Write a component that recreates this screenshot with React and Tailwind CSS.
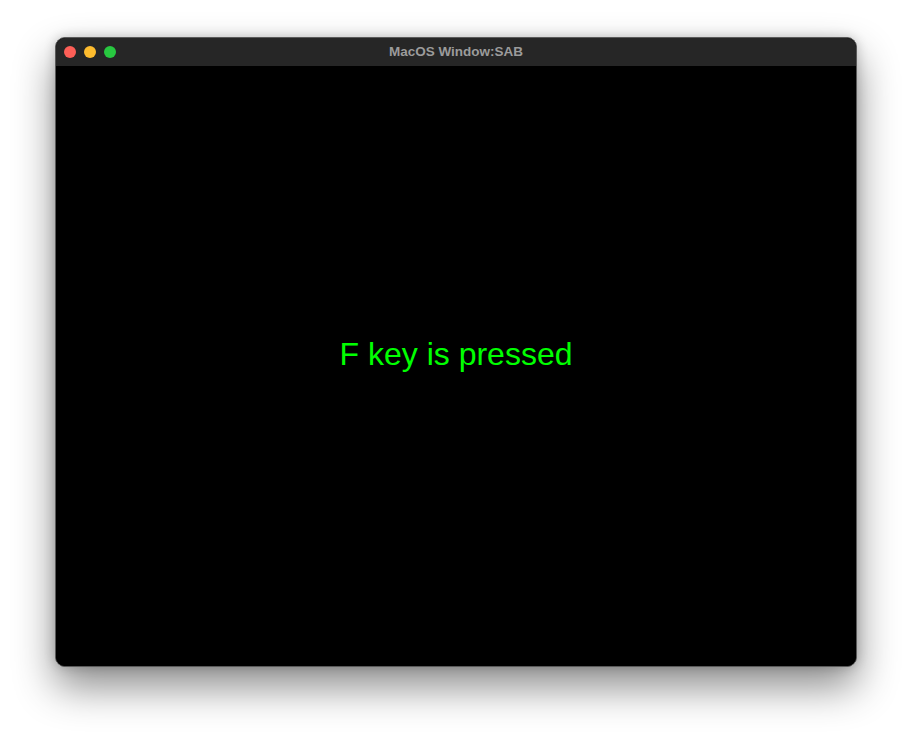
export default function App() {
  return (
    <div className="w-[912px] h-[740px] bg-white pt-[37px] pl-[55px]" style={{ fontFamily: '"Liberation Sans", Arial, sans-serif' }}>
      <div className="w-[802px] h-[630px] rounded-[10px] overflow-hidden bg-black border border-[#5a5a5a] shadow-[0_20px_40px_rgba(0,0,0,0.45),0_0_12px_rgba(0,0,0,0.2)] flex flex-col">
        <div className="h-[28px] bg-[#262626] flex items-center relative shrink-0">
          <div className="flex items-center gap-[8px] pl-[8px]">
            <div className="w-[12px] h-[12px] rounded-full bg-[#fe5f57]" />
            <div className="w-[12px] h-[12px] rounded-full bg-[#febc2e]" />
            <div className="w-[12px] h-[12px] rounded-full bg-[#28c840]" />
          </div>
          <div className="absolute inset-0 flex items-center justify-center text-[13.5px] font-bold text-[#9b9b9b]">
            MacOS Window:SAB
          </div>
        </div>
        <div className="flex-1 bg-black pt-[272px] text-center">
          <div className="text-[32px] leading-[32px] text-[#00ff00]">F key is pressed</div>
        </div>
      </div>
    </div>
  );
}
